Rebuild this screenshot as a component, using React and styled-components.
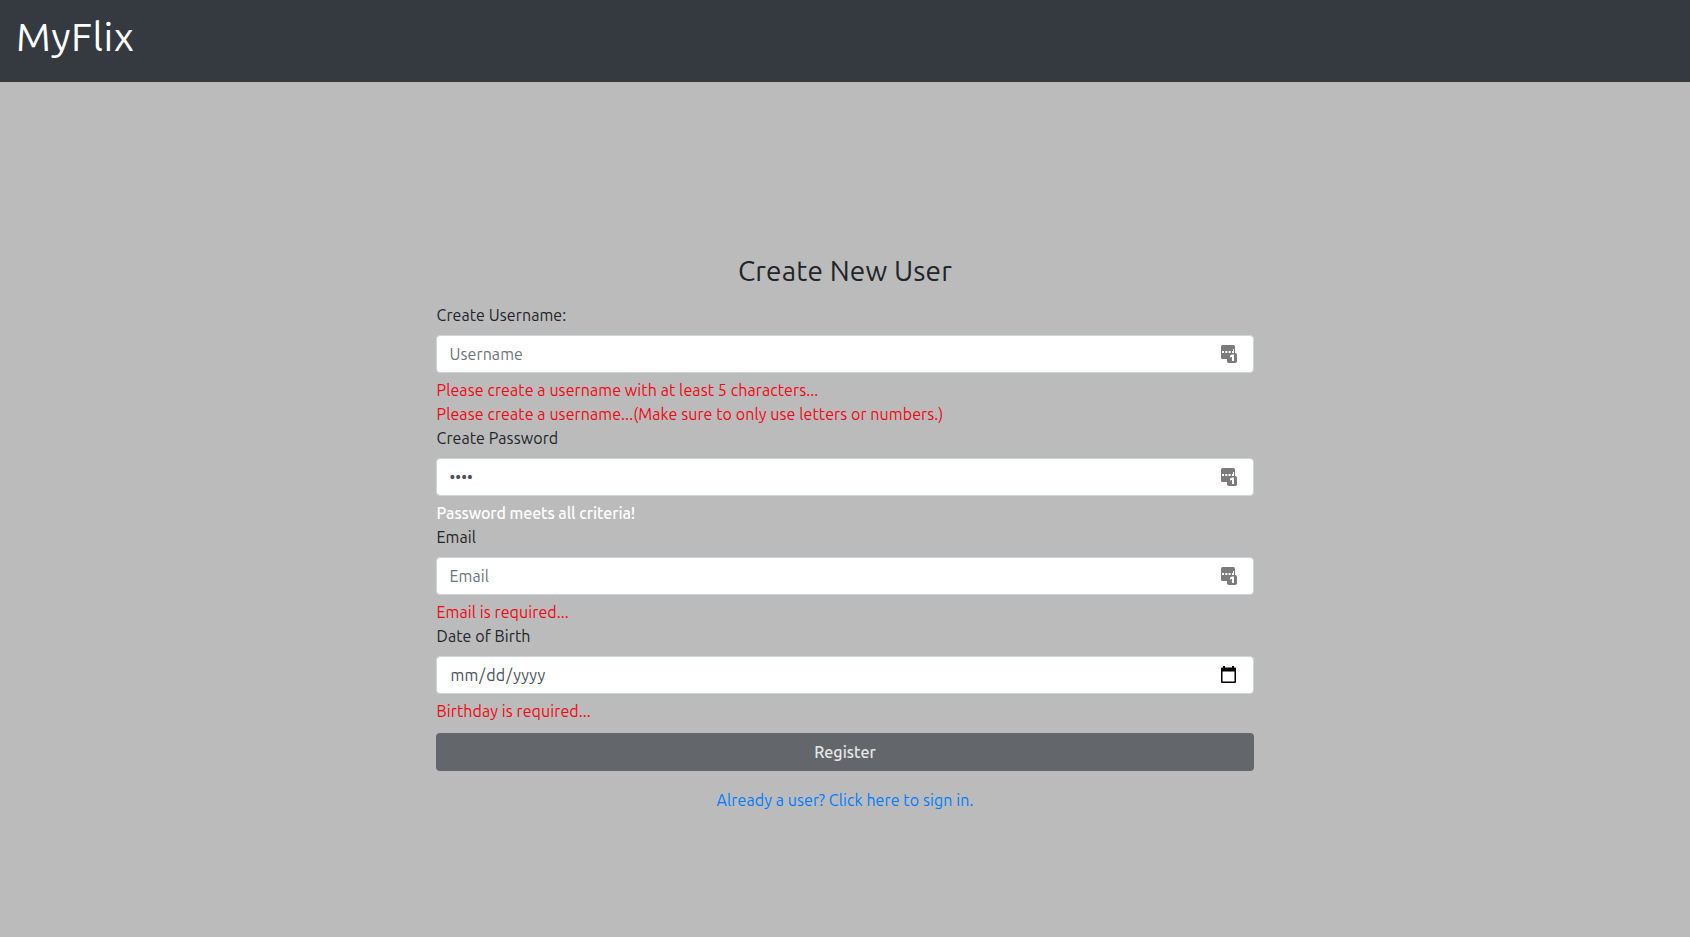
import React from "react";
import styled, { createGlobalStyle } from "styled-components";

const GlobalStyle = createGlobalStyle`
  *, *::before, *::after { box-sizing: border-box; }
  body {
    margin: 0;
    background: #bbbbbb;
    color: #212529;
    font-family: Ubuntu, "Noto Sans", sans-serif;
    font-size: 16px;
    line-height: 24px;
    letter-spacing: 0.09px;
  }
`;

const Page = styled.div`
  display: flex;
  flex-direction: column;
  min-height: 100vh;
`;

const Navbar = styled.header`
  height: 82px;
  padding: 7px 16px 0;
  background: #343a40;
`;

const Brand = styled.a`
  color: #fff;
  font-size: 40px;
  line-height: 60px;
  letter-spacing: 0.5px;
  text-decoration: none;
  white-space: nowrap;
`;

const Form = styled.form`
  display: flex;
  flex-direction: column;
  width: 818px;
  margin: 172px auto 0;
`;

const Title = styled.h3`
  margin: 0 0 15px;
  font-size: 28px;
  font-weight: 400;
  line-height: 34px;
  text-align: center;
  letter-spacing: 0.18px;
`;

const Label = styled.label`
  margin-bottom: 8px;
  padding-left: 0.5px;
  white-space: nowrap;
`;

const Control = styled.div`
  display: flex;
  align-items: center;
  height: 38px;
  margin-bottom: 5px;
  padding: 0 16px 0 12.5px;
  background: #fff;
  border: 1px solid #ced4da;
  border-radius: 4px;
`;

const Input = styled.input`
  flex: 1;
  min-width: 0;
  height: 24px;
  padding: 0;
  border: 0;
  outline: 0;
  background: transparent;
  color: #495057;
  font: inherit;
  letter-spacing: 0.09px;
  &::placeholder { color: #6c757d; opacity: 1; }
  &::-webkit-calendar-picker-indicator { display: none; }
`;

const Message = styled.div`
  padding-left: 0.5px;
  color: ${(p) => (p.$valid ? "#fff" : "#f00814")};
  font-weight: ${(p) => (p.$valid ? 500 : 400)};
  letter-spacing: ${(p) => (p.$valid ? "-0.08px" : "0.09px")};
  white-space: nowrap;
`;

const Submit = styled.button`
  height: 38px;
  margin: 10px 0 17px;
  border: 0;
  border-radius: 4px;
  background: #63676b;
  color: #e7e7e7;
  font: inherit;
  font-weight: 500;
`;

const SignIn = styled.a`
  align-self: center;
  color: #007bff;
  text-decoration: none;
`;

function ManagerIcon() {
  return (
    <svg width="16" height="18" viewBox="0 0 16 18" aria-hidden="true">
      <rect width="14" height="14" rx="1.5" fill="#7b7b7b" />
      <rect x="6" y="8" width="10" height="10" rx="1.8" fill="#7b7b7b" />
      <path fill="#fff" d="M1 6h2v2H1zM4.300 6h2v2h-2zM7.600 6h2v2h-2zM11 6h1V4h1v4h-2z" />
      <path fill="#fff" d="M9 10.700l2-1.200h2V16h-2v-4.300l-2 .8z" />
    </svg>
  );
}

function CalendarIcon() {
  return (
    <svg width="16" height="18" viewBox="0 0 16 18" aria-hidden="true">
      <path
        fill="#000"
        fillRule="evenodd"
        d="M2 0h2v1.500h7V0h2v1.500h1a1 1 0 0 1 1 1V16a1 1 0 0 1-1 1H1a1 1 0 0 1-1-1V2.500a1 1 0 0 1 1-1h1zM1.500 5.500v10h12v-10z"
      />
    </svg>
  );
}

export default function App() {
  return (
    <Page>
      <GlobalStyle />
      <Navbar>
        <Brand>MyFlix</Brand>
      </Navbar>
      <Form>
        <Title>Create New User</Title>
        <Label>Create Username:</Label>
        <Control>
          <Input type="text" placeholder="Username" />
          <ManagerIcon />
        </Control>
        <Message>Please create a username with at least 5 characters...</Message>
        <Message>Please create a username...(Make sure to only use letters or numbers.)</Message>
        <Label>Create Password</Label>
        <Control>
          <Input type="password" defaultValue="pass" />
          <ManagerIcon />
        </Control>
        <Message $valid>Password meets all criteria!</Message>
        <Label>Email</Label>
        <Control>
          <Input type="email" placeholder="Email" />
          <ManagerIcon />
        </Control>
        <Message>Email is required...</Message>
        <Label>Date of Birth</Label>
        <Control>
          <Input type="date" />
          <CalendarIcon />
        </Control>
        <Message>Birthday is required...</Message>
        <Submit type="button">Register</Submit>
        <SignIn>Already a user? Click here to sign in.</SignIn>
      </Form>
    </Page>
  );
}
